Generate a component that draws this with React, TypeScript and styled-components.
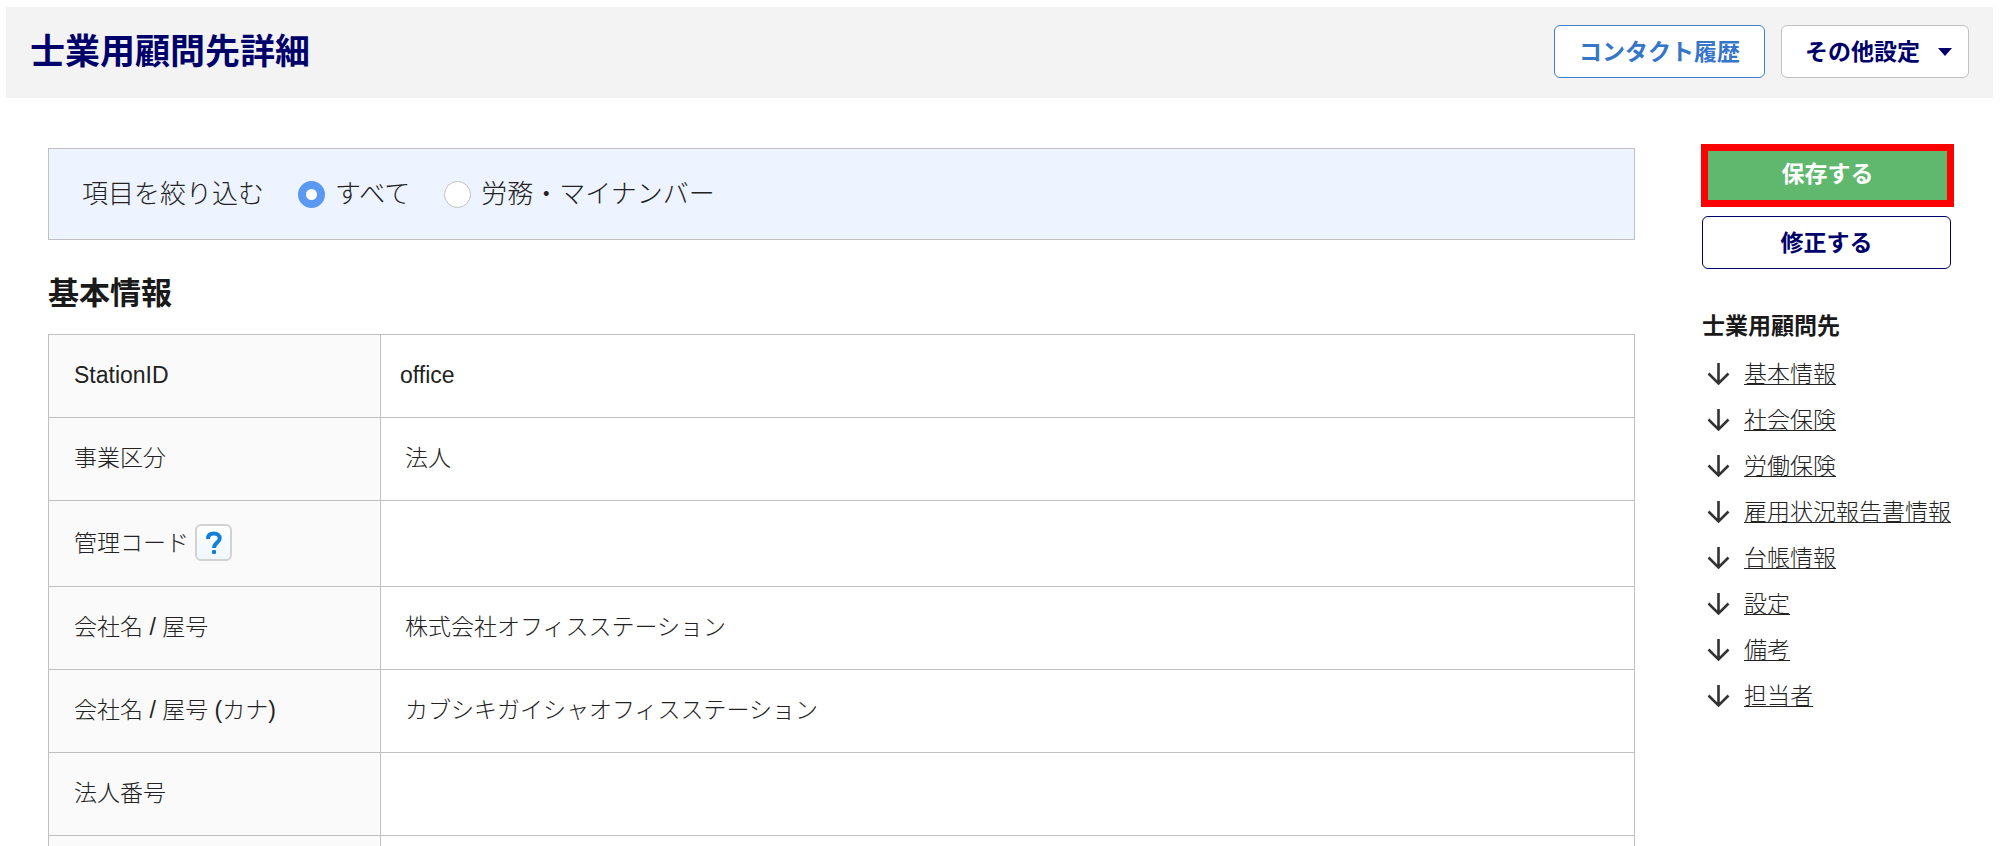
import React, { useState } from "react";
import styled, { createGlobalStyle } from "styled-components";

const navy = "#00006a";
const line = "#c0c0c0";

const GlobalStyle = createGlobalStyle`
  *, *::before, *::after { box-sizing: border-box; }
  body {
    margin: 0;
    background: #fff;
    color: #222;
    font-family: "Liberation Sans", "Noto Sans CJK JP", sans-serif;
    font-size: 23px;
    font-weight: 300;
    line-height: 34px;
  }
  button, input { font-family: inherit; }
`;

const Header = styled.header`
  display: flex;
  align-items: center;
  justify-content: space-between;
  gap: 24px;
  margin: 7px 7px 0 6px;
  padding: 18px 24px 20px;
  background: #f3f3f3;
`;

const Title = styled.h1`
  margin: 0;
  color: ${navy};
  font-size: 35px;
  font-weight: 700;
  line-height: 50px;
`;

const Actions = styled.div`
  display: flex;
  gap: 16px;
`;

const Button = styled.button<{ $tone: "link" | "plain" | "navy" }>`
  display: flex;
  align-items: center;
  justify-content: center;
  gap: 18px;
  height: 53px;
  padding: 0 24px;
  border: 1px solid
    ${(p) => ({ link: "#3f7dcd", plain: line, navy })[p.$tone]};
  border-radius: 6px;
  background: #fff;
  color: ${(p) => (p.$tone === "link" ? "#3676c9" : navy)};
  font-size: 23px;
  font-weight: 700;
  line-height: 34px;
  cursor: pointer;
`;

const MenuButton = styled(Button)`
  padding: 0 16px 0 23px;
`;

const ModifyButton = styled(Button)`
  margin: 0 3px 0 1px;
`;

const Caret = styled.span`
  border: 7px solid transparent;
  border-top: 8px solid ${navy};
  border-bottom: 0;
`;

const SaveButton = styled.button`
  height: 63px;
  padding: 0 0 3px;
  border: 7px solid #f00;
  background: #60b76e;
  color: #fff;
  font-size: 23px;
  font-weight: 700;
  line-height: 34px;
  cursor: pointer;
`;

const Body = styled.div`
  display: grid;
  grid-template-columns: minmax(0, 1fr) 253px;
  align-items: start;
  gap: 66px;
  padding: 46px 46px 0 48px;
`;

const Main = styled.main`
  padding-top: 4px;
`;

const Filter = styled.fieldset`
  display: flex;
  align-items: center;
  gap: 34px;
  height: 92px;
  margin: 0;
  padding: 0 33px;
  border: 1px solid ${line};
  background: #edf4ff;
  font-size: 26px;
`;

const Choice = styled.label`
  display: flex;
  align-items: center;
  gap: 10px;
  cursor: pointer;
`;

const Radio = styled.input`
  appearance: none;
  width: 27px;
  height: 27px;
  margin: 0;
  border: 1px solid ${line};
  border-radius: 50%;
  background: #fff;
  &:checked {
    border: 8px solid #5b98f2;
  }
`;

const SectionTitle = styled.h2`
  margin: 32px 0 18px;
  color: #1a1a1a;
  font-size: 31px;
  font-weight: 700;
  line-height: 44px;
`;

const Table = styled.table`
  width: 100%;
  border-collapse: collapse;
  table-layout: fixed;
`;

const LabelCell = styled.th`
  width: 332px;
  height: 83px;
  padding: 0 25px 2px;
  border: 1px solid ${line};
  background: #fafafa;
  font-weight: inherit;
  text-align: left;
`;

const LabelContent = styled.div`
  display: flex;
  align-items: center;
  gap: 6px;
`;

const ValueCell = styled.td<{ $narrow?: boolean }>`
  padding: 0 ${(p) => (p.$narrow ? 19 : 24)}px 2px;
  border: 1px solid ${line};
`;

const HelpButton = styled.button`
  display: flex;
  align-items: center;
  justify-content: center;
  width: 37px;
  height: 37px;
  margin: 23px 0;
  padding: 0;
  border: 2px solid #d2d2d2;
  border-radius: 6px;
  background: linear-gradient(#fff, #f0f7fd);
  cursor: pointer;
`;

const Side = styled.aside`
  display: flex;
  flex-direction: column;
  gap: 9px;
`;

const SideTitle = styled.h2`
  margin: 31px 0 0 1px;
  color: #1a1a1a;
  font-size: 23px;
  font-weight: 700;
  line-height: 34px;
`;

const LinkList = styled.ul`
  margin: -1px 0 0;
  padding: 0 0 0 6px;
  list-style: none;
`;

const LinkItem = styled.li`
  display: flex;
  align-items: center;
  gap: 14px;
  height: 46px;
  white-space: nowrap;
  a {
    color: inherit;
    text-decoration-thickness: 1px;
    text-underline-offset: 2px;
  }
`;

const DownArrow = () => (
  <svg width="23" height="24" viewBox="0 0 23 24" fill="none" stroke="#333" strokeWidth="2.6" aria-hidden="true">
    <path d="M11.5 1v20.5M1.5 11.5l10 10 10-10" />
  </svg>
);

const QuestionIcon = () => (
  <svg width="18" height="24" viewBox="0 0 18 24" fill="none" aria-hidden="true">
    <path d="M3 8C3 4.400 5.400 2.600 8.800 2.600c3.500 0 5.900 1.800 5.900 4.900 0 4.200-5.700 4.100-5.700 9.600" stroke="#1280d8" strokeWidth="4" />
    <rect x="7" y="19" width="4" height="4" rx="1" fill="#1280d8" />
  </svg>
);

type Row = { label: string; value: string; help?: boolean };

const rows: Row[] = [
  { label: "StationID", value: "office" },
  { label: "事業区分", value: "法人" },
  { label: "管理コード", value: "", help: true },
  { label: "会社名 / 屋号", value: "株式会社オフィスステーション" },
  { label: "会社名 / 屋号 (カナ)", value: "カブシキガイシャオフィスステーション" },
  { label: "法人番号", value: "" },
  { label: "", value: "" },
];

const filters = ["すべて", "労務・マイナンバー"];

const links = ["基本情報", "社会保険", "労働保険", "雇用状況報告書情報", "台帳情報", "設定", "備考", "担当者"];

export default function App() {
  const [filter, setFilter] = useState(filters[0]);

  return (
    <>
      <GlobalStyle />
      <Header>
        <Title>士業用顧問先詳細</Title>
        <Actions>
          <Button type="button" $tone="link">コンタクト履歴</Button>
          <MenuButton type="button" $tone="plain" aria-haspopup="menu">
            その他設定
            <Caret />
          </MenuButton>
        </Actions>
      </Header>
      <Body>
        <Main>
          <Filter aria-labelledby="filter-label">
            <span id="filter-label">項目を絞り込む</span>
            {filters.map((name) => (
              <Choice key={name}>
                <Radio
                  type="radio"
                  name="filter"
                  checked={filter === name}
                  onChange={() => setFilter(name)}
                />
                {name}
              </Choice>
            ))}
          </Filter>
          <SectionTitle id="section-0">基本情報</SectionTitle>
          <Table>
            <tbody>
              {rows.map((row, i) => (
                <tr key={i}>
                  <LabelCell scope="row">
                    <LabelContent>
                      {row.label}
                      {row.help && (
                        <HelpButton type="button" aria-label="ヘルプ">
                          <QuestionIcon />
                        </HelpButton>
                      )}
                    </LabelContent>
                  </LabelCell>
                  <ValueCell $narrow={i === 0}>{row.value}</ValueCell>
                </tr>
              ))}
            </tbody>
          </Table>
        </Main>
        <Side>
          <SaveButton type="button">保存する</SaveButton>
          <ModifyButton type="button" $tone="navy">修正する</ModifyButton>
          <SideTitle>士業用顧問先</SideTitle>
          <LinkList>
            {links.map((name, i) => (
              <LinkItem key={name}>
                <DownArrow />
                <a href={`#section-${i}`}>{name}</a>
              </LinkItem>
            ))}
          </LinkList>
        </Side>
      </Body>
    </>
  );
}
